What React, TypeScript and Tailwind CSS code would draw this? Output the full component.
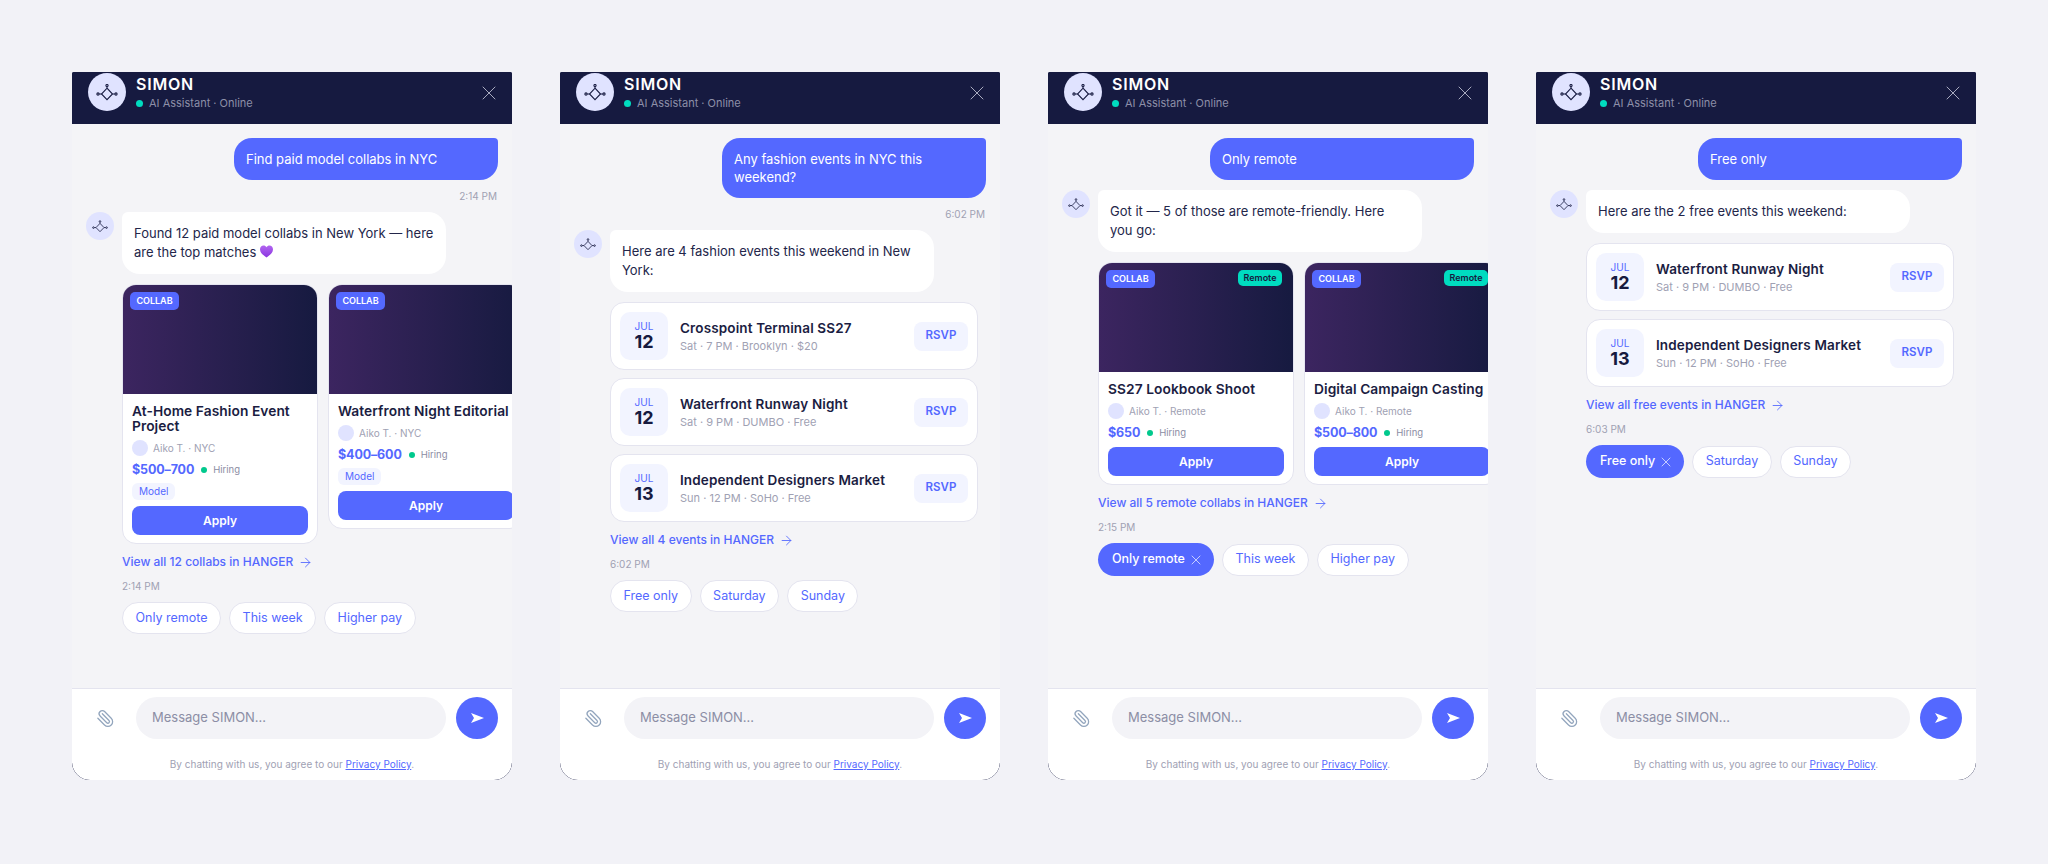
import React from 'react';
import { ArrowRight, Paperclip, X } from 'lucide-react';

const Logo: React.FC<{ className: string }> = ({ className }) => (
  <svg viewBox="0 0 22 17" fill="none" stroke="#161a40" strokeWidth="1.1" className={className}>
    <circle cx="11" cy="1.6" r="1.1" />
    <path d="M11 2.7V4.2M11 4.2L16.5 10L11 15.6L5.5 10Z" />
    <circle cx="2" cy="10" r="1.1" />
    <circle cx="20" cy="10" r="1.1" />
    <path d="M3.1 10H5.5M16.5 10H18.9" />
  </svg>
);

const Heart = () => (
  <svg viewBox="0 0 14 13" className="inline-block w-[13px] h-[13px] align-[-1px]">
    <defs>
      <linearGradient id="heart" x1="0" y1="0" x2="0" y2="1">
        <stop offset="0" stopColor="#b266f0" />
        <stop offset="1" stopColor="#8a35e0" />
      </linearGradient>
    </defs>
    <path d="M7 13C3 10 0 7.6 0 4C0 1.6 1.8 0 3.8 0C5.1 0 6.3 .7 7 1.9C7.7 .7 8.9 0 10.2 0C12.2 0 14 1.6 14 4C14 7.6 11 10 7 13Z" fill="url(#heart)" />
  </svg>
);

const Time: React.FC<{ children: React.ReactNode; right?: boolean }> = ({ children, right }) => (
  <p className={`text-[10px] leading-[12px] text-[#a0a1b3] ${right ? 'text-right pr-px' : ''}`}>{children}</p>
);

const UserBubble: React.FC<{ children: React.ReactNode }> = ({ children }) => (
  <div className="self-end w-[264px] bg-[#5468ff] text-white text-[13px] leading-[18px] px-3 py-3 rounded-[18px] rounded-tr-[4px]">
    {children}
  </div>
);

const BotBubble: React.FC<{ children: React.ReactNode }> = ({ children }) => (
  <div className="flex gap-2 items-start -ml-9">
    <div className="w-7 h-7 shrink-0 rounded-full bg-[#e0e3ff] flex items-center justify-center">
      <Logo className="w-4 h-[13px]" />
    </div>
    <div className="w-[324px] bg-white text-[#23264a] text-[13px] leading-[19px] px-3 py-3 rounded-[18px] rounded-tl-[6px]">
      {children}
    </div>
  </div>
);

interface Collab {
  title: string;
  place: string;
  pay: string;
  remote?: boolean;
  tag?: boolean;
}

const CollabCard: React.FC<Collab> = ({ title, place, pay, remote, tag }) => (
  <div className="w-[196px] shrink-0 bg-white border border-[#e4e4ef] rounded-[14px] overflow-hidden">
    <div className="relative h-[109px] bg-gradient-to-r from-[#3c2560] to-[#161a40]">
      <span className="absolute left-[7px] top-[7px] h-[18px] w-[49px] flex items-center justify-center rounded-[5px] bg-[#5468ff] text-white text-[9px] font-semibold">
        COLLAB
      </span>
      {remote && (
        <span className="absolute right-[11px] top-[7px] h-4 w-11 flex items-center justify-center rounded-[5px] bg-[#00dcc0] text-[#161a40] text-[9px] font-semibold">
          Remote
        </span>
      )}
    </div>
    <div className="px-[9px] pt-[10px] pb-2 flex flex-col">
      <h3 className="text-[13.75px] leading-[15px] font-semibold text-[#1b1d42] tracking-[0.005em]">{title}</h3>
      <div className="flex items-center gap-[5px] mt-[6px]">
        <span className="w-4 h-4 rounded-full bg-[#e0e3ff]" />
        <span className="text-[10px] text-[#a0a1b3]">Aiko T. · {place}</span>
      </div>
      <div className="flex items-center mt-[6px] h-4">
        <span className="text-[12.5px] font-bold text-[#5468ff] tracking-[-0.01em]">{pay}</span>
        <span className="w-[6px] h-[6px] rounded-full bg-[#00c98d] ml-[7px]" />
        <span className="text-[9.5px] text-[#8b8ca3] ml-[6px]">Hiring</span>
      </div>
      {tag && (
        <span className="self-start mt-[5px] h-[17px] px-[7px] flex items-center rounded-[6px] bg-[#f2f4ff] text-[#5468ff] text-[10px]">
          Model
        </span>
      )}
      <button className="mt-[6px] h-[29px] w-full rounded-[8px] bg-[#5468ff] text-white text-[12px] font-semibold">
        Apply
      </button>
    </div>
  </div>
);

interface EventItem {
  day: string;
  title: string;
  info: string;
}

const EventCard: React.FC<EventItem> = ({ day, title, info }) => (
  <div className="w-[368px] h-[68px] bg-white border border-[#e4e4ef] rounded-[14px] px-[9px] flex items-center">
    <div className="w-12 h-12 shrink-0 rounded-[10px] bg-[#f2f4ff] flex flex-col items-center justify-center">
      <span className="text-[10px] leading-[11px] text-[#5468ff]">JUL</span>
      <span className="text-[18px] leading-[20px] font-bold text-[#161a40]">{day}</span>
    </div>
    <div className="flex-1 ml-3 min-w-0 pt-px">
      <h3 className="text-[13.5px] leading-[17px] font-semibold text-[#1b1d42] tracking-[0.01em] whitespace-nowrap">{title}</h3>
      <p className="text-[11px] leading-[15px] mt-[2px] text-[#a0a1b3] whitespace-nowrap">{info}</p>
    </div>
    <button className="w-[54px] h-[29px] shrink-0 rounded-[8px] bg-[#f2f4ff] text-[#5468ff] text-[11.5px] font-semibold">
      RSVP
    </button>
  </div>
);

const ViewAll: React.FC<{ children: React.ReactNode }> = ({ children }) => (
  <a className="flex items-center gap-[5px] h-4 text-[12px] font-medium text-[#5468ff]">
    {children}
    <ArrowRight size={15} strokeWidth={1.4} />
  </a>
);

const Chips: React.FC<{ items: string[]; active?: string }> = ({ items, active }) => (
  <div className="flex gap-2 items-center">
    {active && (
      <span className="h-[33px] pl-[14px] pr-[10px] flex items-center gap-[3px] rounded-full bg-[#5468ff] text-white text-[12.5px] font-medium">
        {active}
        <X size={16} strokeWidth={1} />
      </span>
    )}
    {items.map((c) => (
      <span key={c} className="h-8 px-[12.5px] flex items-center rounded-full bg-white border border-[#e4e4ef] text-[#5468ff] text-[12.5px]">
        {c}
      </span>
    ))}
  </div>
);

const Panel: React.FC<{ children: React.ReactNode }> = ({ children }) => (
  <div className="w-[440px] h-[708px] flex flex-col bg-[#161a40] rounded-t-[2px] rounded-b-[18px] overflow-hidden">
    <header className="h-[52px] shrink-0 bg-[#161a40] pl-4 pr-[17px] flex items-start">
      <div className="w-[38px] h-[38px] mt-px rounded-full bg-[#e0e3ff] flex items-center justify-center">
        <Logo className="w-[22px] h-[17px]" />
      </div>
      <div className="ml-[10px]">
        <h2 className="text-[16px] leading-[20px] mt-[2px] font-semibold text-white tracking-[0.05em]">SIMON</h2>
        <div className="flex items-center gap-[6px] mt-[2px]">
          <span className="w-[7px] h-[7px] rounded-full bg-[#00dcc0]" />
          <span className="text-[11px] leading-[14px] text-[#8d8fa8]">AI Assistant · Online</span>
        </div>
      </div>
      <X size={24} strokeWidth={1} className="ml-auto mt-[9px] -mr-[6px] text-[#a9abc0]" />
    </header>
    <main className="flex-1 bg-[#f4f4f7] overflow-hidden pt-[14px] pl-[50px] pr-[14px] flex flex-col gap-[10px]">
      {children}
    </main>
    <footer className="h-[92px] shrink-0 bg-white border-t border-[#e4e4ef] rounded-b-[18px] flex flex-col">
      <div className="flex items-center pt-2 pl-[24px] pr-[14px]">
        <Paperclip size={19} strokeWidth={1.6} className="text-[#92a5bd] -scale-x-100 shrink-0" />
        <div className="ml-[21px] w-[310px] h-[42px] rounded-full bg-[#f3f3f7] pl-4 flex items-center text-[13px] text-[#8c8ea5]">
          Message SIMON…
        </div>
        <div className="ml-[10px] w-[42px] h-[42px] rounded-full bg-[#5468ff] flex items-center justify-center">
          <svg viewBox="0 0 13 10" className="w-[13px] h-[10px]" fill="#fff">
            <path d="M0 0L13 5L0 10L3 5Z" />
          </svg>
        </div>
      </div>
      <p className="text-center text-[10px] leading-[12px] mt-[19px] text-[#a0a1b3]">
        By chatting with us, you agree to our <span className="text-[#5468ff] underline">Privacy Policy</span>.
      </p>
    </footer>
  </div>
);

const sat12 = { day: '12', title: 'Waterfront Runway Night', info: 'Sat · 9 PM · DUMBO · Free' };
const sun13 = { day: '13', title: 'Independent Designers Market', info: 'Sun · 12 PM · SoHo · Free' };

export default function App() {
  return (
    <div className="w-[2048px] h-[864px] bg-[#f2f2f7] px-[72px] pt-[72px] flex gap-12 font-['Inter',sans-serif]">
      <Panel>
        <UserBubble>Find paid model collabs in NYC</UserBubble>
        <Time right>2:14 PM</Time>
        <BotBubble>
          Found 12 paid model collabs in New York — here are the top matches <Heart />
        </BotBubble>
        <div className="flex gap-[10px] items-start">
          <CollabCard title="At-Home Fashion Event Project" place="NYC" pay="$500–700" tag />
          <CollabCard title="Waterfront Night Editorial" place="NYC" pay="$400–600" tag />
        </div>
        <ViewAll>View all 12 collabs in HANGER</ViewAll>
        <Time>2:14 PM</Time>
        <Chips items={['Only remote', 'This week', 'Higher pay']} />
      </Panel>

      <Panel>
        <UserBubble>Any fashion events in NYC this weekend?</UserBubble>
        <Time right>6:02 PM</Time>
        <BotBubble>Here are 4 fashion events this weekend in New York:</BotBubble>
        <div className="flex flex-col gap-2">
          <EventCard day="12" title="Crosspoint Terminal SS27" info="Sat · 7 PM · Brooklyn · $20" />
          <EventCard {...sat12} />
          <EventCard {...sun13} />
        </div>
        <ViewAll>View all 4 events in HANGER</ViewAll>
        <Time>6:02 PM</Time>
        <Chips items={['Free only', 'Saturday', 'Sunday']} />
      </Panel>

      <Panel>
        <UserBubble>Only remote</UserBubble>
        <BotBubble>Got it — 5 of those are remote-friendly. Here you go:</BotBubble>
        <div className="flex gap-[10px] items-start">
          <CollabCard title="SS27 Lookbook Shoot" place="Remote" pay="$650" remote />
          <CollabCard title="Digital Campaign Casting" place="Remote" pay="$500–800" remote />
        </div>
        <ViewAll>View all 5 remote collabs in HANGER</ViewAll>
        <Time>2:15 PM</Time>
        <Chips active="Only remote" items={['This week', 'Higher pay']} />
      </Panel>

      <Panel>
        <UserBubble>Free only</UserBubble>
        <BotBubble>Here are the 2 free events this weekend:</BotBubble>
        <div className="flex flex-col gap-2">
          <EventCard {...sat12} />
          <EventCard {...sun13} />
        </div>
        <ViewAll>View all free events in HANGER</ViewAll>
        <Time>6:03 PM</Time>
        <Chips active="Free only" items={['Saturday', 'Sunday']} />
      </Panel>
    </div>
  );
}
